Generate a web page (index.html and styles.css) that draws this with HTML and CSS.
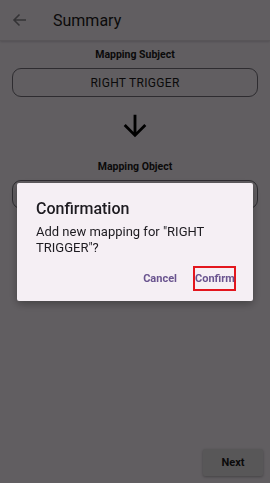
FILE: index.html
```html
<!DOCTYPE html>
<html lang="en">
<head>
    <meta charset="UTF-8">
    <meta name="viewport" content="width=device-width, initial-scale=1.0">
    <title>Summary</title>
    <link rel="stylesheet" href="styles.css">
</head>
<body>
    <div class="screen">
        <header class="topbar">
            <svg class="back" width="24" height="24" viewBox="0 0 24 24">
                <path d="M18 12H6.5M11.5 6.5L6 12l5.5 5.5" fill="none" stroke="#8a878d" stroke-width="1.6"/>
            </svg>
            <h1>Summary</h1>
        </header>
        <main class="content">
            <p class="label">Mapping Subject</p>
            <div class="field">RIGHT TRIGGER</div>
            <svg class="down" width="34" height="34" viewBox="0 0 24 24">
                <path d="M20 12l-1.41-1.41L13 16.17V4h-2v12.17l-5.58-5.59L4 12l8 8 8-8z" fill="#000"/>
            </svg>
            <p class="label">Mapping Object</p>
            <div class="field"></div>
        </main>
        <footer class="actions">
            <button class="next">Next</button>
        </footer>
    </div>

    <!-- dialog over the dimmed page -->
    <div class="scrim">
        <div class="dialog">
            <h2>Confirmation</h2>
            <p class="message">Add new mapping for "RIGHT TRIGGER"?</p>
            <div class="dialog-buttons">
                <button class="text-btn">Cancel</button>
                <button class="text-btn highlight">Confirm</button>
            </div>
        </div>
    </div>
</body>
</html>
```

FILE: styles.css
```css
body {
    margin: 0;
    padding: 0;
    font-family: Roboto, "Noto Sans", sans-serif;
    background-color: #fef7ff;
    color: #1d1b20;
}
.screen {
    height: 100vh;
    display: flex;
    flex-direction: column;
}
.topbar {
    height: 40px;
    display: flex;
    align-items: center;
    padding-left: 8px;
    border-bottom: 1px solid #e6dfe8;
    box-shadow: 0 1px 2px rgba(0, 0, 0, 0.15);
}
.back {
    display: block;
}
.topbar h1 {
    margin: 0 0 0 21px;
    font-size: 16px;
    font-weight: 400;
}
.content {
    flex: 1;
    display: flex;
    flex-direction: column;
    align-items: center;
    padding: 0 12px;
}
.label {
    margin: 7px 0 6px;
    font-size: 10.5px;
    font-weight: 700;
    line-height: 14px;
}
.field {
    box-sizing: border-box;
    width: 100%;
    height: 29px;
    border: 1px solid #79747e;
    border-radius: 9px;
    display: flex;
    align-items: center;
    justify-content: center;
    font-size: 12px;
    letter-spacing: 0.3px;
}
.down {
    display: block;
    margin: 12px 0 10px;
}
.actions {
    display: flex;
    justify-content: flex-end;
    padding: 0 7px 7px 0;
}
.next {
    width: 60px;
    height: 27px;
    border: none;
    border-radius: 2px;
    background-color: #e6e4e6;
    box-shadow: 0 1px 3px rgba(0, 0, 0, 0.3);
    font-family: inherit;
    font-size: 11px;
    font-weight: 700;
    color: #1d1b20;
}
.scrim {
    position: fixed;
    inset: 0;
    background-color: rgba(0, 0, 0, 0.62);
    display: flex;
    align-items: center;
    justify-content: center;
}
.dialog {
    box-sizing: border-box;
    width: 236px;
    height: 118px;
    background-color: #f5eff4;
    border-radius: 2px;
    padding: 16px 17px 0 19px;
    box-shadow: 0 3px 8px rgba(0, 0, 0, 0.3);
}
.dialog h2 {
    margin: 0;
    font-size: 16px;
    font-weight: 500;
    line-height: 20px;
}
.message {
    margin: 5px 0 0;
    font-size: 13px;
    line-height: 16px;
    color: #1d1b20;
}
.dialog-buttons {
    display: flex;
    justify-content: flex-end;
    gap: 16px;
    margin-top: 10px;
}
.text-btn {
    border: none;
    background: none;
    padding: 0;
    height: 25px;
    font-family: inherit;
    font-size: 11px;
    font-weight: 700;
    color: #6a548f;
}
.highlight {
    box-sizing: border-box;
    width: 43px;
    border: 2px solid #e3161d;
    margin-right: 0;
}
```
